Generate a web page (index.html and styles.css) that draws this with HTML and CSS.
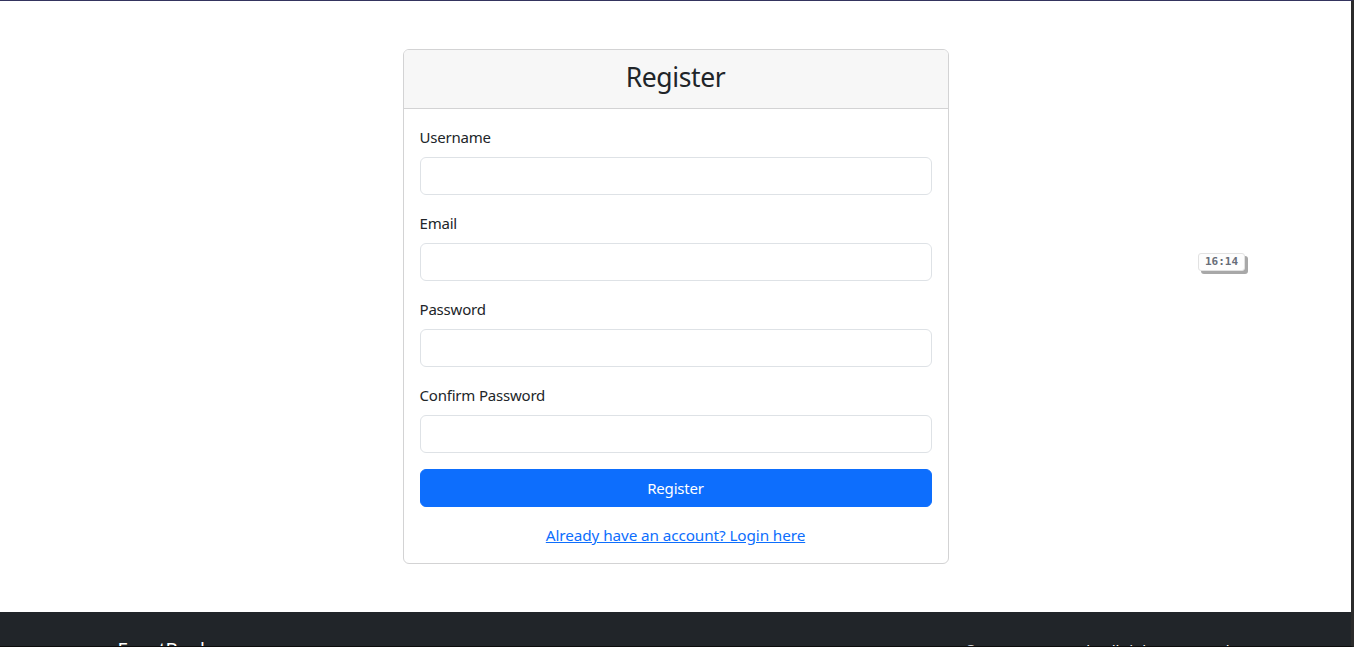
FILE: index.html
```html
<!DOCTYPE html>
<html lang="en">
<head>
<meta charset="utf-8">
<title>Register - EventBook</title>
<link rel="stylesheet" href="styles.css">
</head>
<body>
<div class="page">
  <main class="main">
    <div class="container">
      <div class="card">
        <div class="card-header"><h3 class="card-title">Register</h3></div>
        <div class="card-body">
          <form class="form">
            <div class="field">
              <label class="label" for="username">Username</label>
              <input class="input" id="username" type="text">
            </div>
            <div class="field">
              <label class="label" for="email">Email</label>
              <input class="input" id="email" type="email">
            </div>
            <div class="field">
              <label class="label" for="password">Password</label>
              <input class="input" id="password" type="password">
            </div>
            <div class="field">
              <label class="label" for="confirm">Confirm Password</label>
              <input class="input" id="confirm" type="password">
            </div>
            <button class="btn" type="button">Register</button>
          </form>
          <p class="login-line"><a class="login-link" href="#">Already have an account? Login here</a></p>
        </div>
      </div>
    </div>
  </main>
  <footer class="footer">
    <div class="container footer-row">
      <h5 class="brand">EventBook</h5>
      <p class="copy">© 2025 EventBook. All rights reserved.</p>
    </div>
  </footer>
</div>
<div class="time-badge">16:14</div>
<div class="frame"></div>
</body>
</html>
```

FILE: styles.css
```css
* { box-sizing: border-box; }
html, body { margin: 0; padding: 0; }
body {
  font-family: "Noto Sans", "Open Sans", sans-serif;
  font-size: 16px;
  line-height: 1.5;
  color: #212529;
  background: #fff;
  overflow: hidden;
  height: 647px;
}
.page {
  padding-top: 1px;
  padding-right: 3px;
}
.main {
  padding-top: 48px;
  padding-bottom: 48px;
}
.container {
  width: 1140px;
  margin: 0 auto;
  padding: 0 12px;
}
.card {
  width: 546px;
  margin-left: 285px;
  border: 1px solid #d3d3d4;
  border-radius: 6px;
  overflow: hidden;
}
.card-header {
  background: #f7f7f7;
  border-bottom: 1px solid #d3d3d4;
  padding: 6px 16px 10px;
  text-align: center;
}
.card-title {
  margin: 0;
  font-size: 26.5px;
  font-weight: 400;
  line-height: 42px;
  letter-spacing: -0.4px;
}
.card-body {
  padding: 16px;
}
.form { display: flex; flex-direction: column; }
.field {
  display: flex;
  flex-direction: column;
  margin-bottom: 16px;
}
.label {
  margin-bottom: 8px;
  font-size: 15px;
  letter-spacing: -0.2px;
  line-height: 24px;
}
.input {
  height: 38px;
  border: 1px solid #dee2e6;
  border-radius: 6px;
  padding: 6px 12px;
  font: inherit;
  background: #fff;
}
.btn {
  height: 38px;
  border: 1px solid #0d6efd;
  background: #0d6efd;
  color: #fff;
  border-radius: 6px;
  font-family: inherit;
  font-size: 15px;
  letter-spacing: -0.2px;
  padding: 0 12px;
}
.login-line {
  margin: 16px 0 0;
  text-align: center;
  line-height: 24px;
}
.login-link {
  color: #0d6efd;
  text-decoration: underline;
  font-size: 15.3px;
  letter-spacing: -0.1px;
}
.footer {
  background: #212529;
  color: #fff;
  padding: 27px 0 24px;
}
.footer-row {
  display: flex;
  justify-content: space-between;
  align-items: center;
}
.brand {
  margin: 0;
  font-size: 19px;
  font-weight: 400;
  line-height: 1.2;
  letter-spacing: -0.3px;
}
.copy {
  margin: 0;
  font-size: 15.3px;
  letter-spacing: -0.15px;
}
.time-badge {
  position: absolute;
  left: 1198px;
  top: 253px;
  width: 47px;
  height: 18px;
  background: #fdfdfd;
  border: 1px solid #e2e2e2;
  border-radius: 3px;
  box-shadow: 3px 3px 0 #a8a8a8;
  font-family: "DejaVu Sans Mono", monospace;
  font-size: 11px;
  font-weight: bold;
  color: #676d78;
  text-align: center;
  line-height: 16px;
}
.frame {
  position: fixed;
  top: 0; left: 0; right: 0; bottom: 0;
  border-top: 1px solid #34345e;
  border-right: 3px solid #2b2b2b;
  border-bottom: 1px solid #0c0c0c;
  pointer-events: none;
}
```
